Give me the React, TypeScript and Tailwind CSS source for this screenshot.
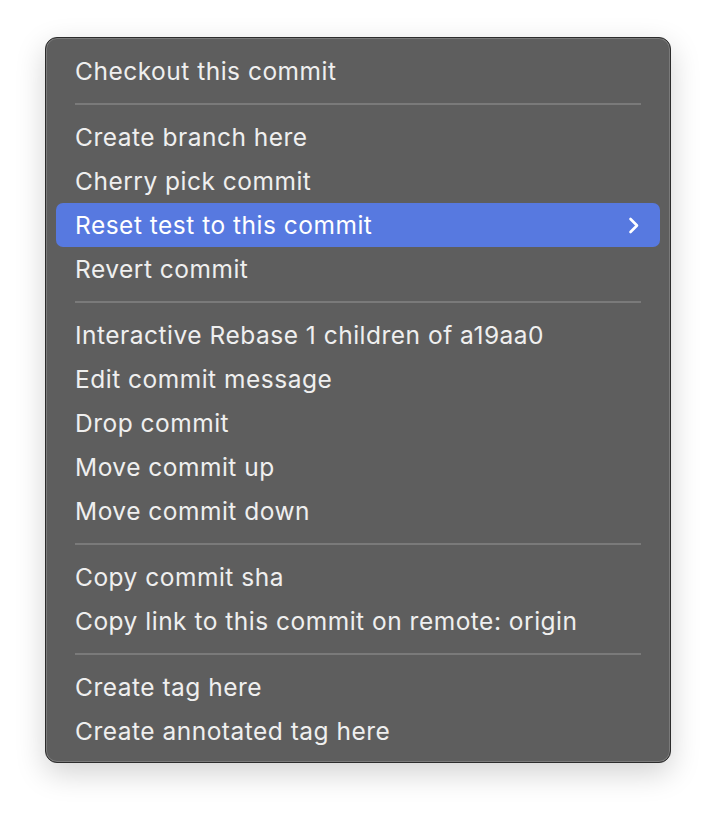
type Entry = { label: string; active?: boolean; sub?: boolean } | "sep";

const entries: Entry[] = [
  { label: "Checkout this commit" },
  "sep",
  { label: "Create branch here" },
  { label: "Cherry pick commit" },
  { label: "Reset test to this commit", active: true, sub: true },
  { label: "Revert commit" },
  "sep",
  { label: "Interactive Rebase 1 children of a19aa0" },
  { label: "Edit commit message" },
  { label: "Drop commit" },
  { label: "Move commit up" },
  { label: "Move commit down" },
  "sep",
  { label: "Copy commit sha" },
  { label: "Copy link to this commit on remote: origin" },
  "sep",
  { label: "Create tag here" },
  { label: "Create annotated tag here" },
];

export default function App() {
  return (
    <div className="w-[716px] h-[816px] bg-white pt-[37px] pl-[45px]">
      <div
        className="w-[626px] rounded-[12px] border border-[#2c2c2c] bg-[#5e5e5e] shadow-[0_10px_30px_rgba(0,0,0,0.18),inset_0_0_0_1px_#7a7a7a] pt-[11px] pb-[9px] px-[10px]"
        style={{ fontFamily: "Inter, 'Noto Sans', sans-serif" }}
      >
        {entries.map((e, i) =>
          e === "sep" ? (
            <div key={i} className="h-[22px] flex items-center px-[19px]">
              <div className="h-[2px] w-full bg-[#7a7a7a]" />
            </div>
          ) : (
            <div
              key={i}
              className={`h-[44px] flex items-center justify-between pl-[19px] pr-[20px] pt-[1px] rounded-[7px] text-[24.5px] tracking-[0.5px] ${
                e.active ? "bg-[#5779e0] text-white" : "text-[#efefef]"
              }`}
            >
              <span>{e.label}</span>
              {e.sub && (
                <svg width="12" height="17" viewBox="0 0 12 17" fill="none" className="-mt-[1px]">
                  <polyline
                    points="2.5,2 9,8.5 2.5,15"
                    stroke="white"
                    strokeWidth="2.6"
                    strokeLinecap="round"
                    strokeLinejoin="round"
                  />
                </svg>
              )}
            </div>
          )
        )}
      </div>
    </div>
  );
}
